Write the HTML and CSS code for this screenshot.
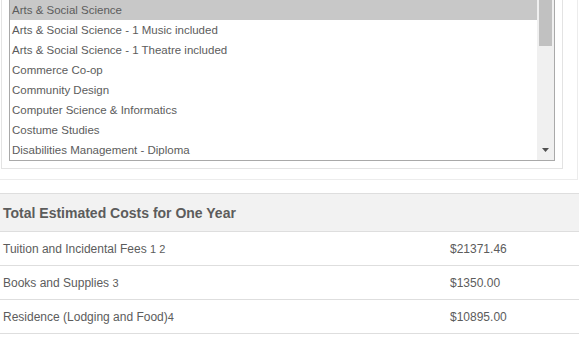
FILE: index.html
```html
<!DOCTYPE html>
<html lang="en">
<head>
    <meta charset="UTF-8">
    <meta name="viewport" content="width=device-width, initial-scale=1.0">
    <title>Estimated Costs</title>
    <link rel="stylesheet" href="styles.css">
</head>
<body>
    <div class="program-section">
        <div class="program-panel">
            <div class="listbox">
                <ul class="options">
                    <li class="selected">Arts &amp; Social Science</li>
                    <li>Arts &amp; Social Science - 1 Music included</li>
                    <li>Arts &amp; Social Science - 1 Theatre included</li>
                    <li>Commerce Co-op</li>
                    <li>Community Design</li>
                    <li>Computer Science &amp; Informatics</li>
                    <li>Costume Studies</li>
                    <li>Disabilities Management - Diploma</li>
                </ul>
                <div class="scrollbar">
                    <div class="thumb"></div>
                    <svg class="arrow" width="7" height="4" viewBox="0 0 7 4"><path d="M0 0H7L3.5 4Z" fill="#505050"/></svg>
                </div>
            </div>
        </div>
    </div>

    <table class="costs">
        <thead>
            <tr><th colspan="2">Total Estimated Costs for One Year</th></tr>
        </thead>
        <tbody>
            <tr><td>Tuition and Incidental Fees <span class="note">1 2</span></td><td class="amount">$21371.46</td></tr>
            <tr><td>Books and Supplies <span class="note">3</span></td><td class="amount">$1350.00</td></tr>
            <tr><td>Residence (Lodging and Food)<span class="note">4</span></td><td class="amount">$10895.00</td></tr>
        </tbody>
    </table>
</body>
</html>
```

FILE: styles.css
```css
body {
    margin: 0;
    font-family: "Liberation Sans", Arial, sans-serif;
    color: #5c5c5c;
    background: #fff;
    overflow: hidden;
}
.program-section {
    width: 577px;
    margin-top: -9px;
    padding-bottom: 10px;
    border-right: 1px solid #ececec;
    border-bottom: 1px solid #ececec;
}
.program-panel {
    margin-left: 1px;
    width: 562px;
    padding: 7px;
    box-sizing: border-box;
    border: 1px solid #e3e3e3;
}
.listbox {
    display: flex;
    border: 1px solid #a9a9a9;
    background: #fff;
}
.options {
    list-style: none;
    margin: 0;
    padding: 0;
    flex: 1;
}
.options li {
    height: 20px;
    line-height: 20px;
    padding-left: 2px;
    font-size: 11.5px;
    white-space: nowrap;
}
.options li.selected {
    background: #c8c8c8;
}
.scrollbar {
    width: 17px;
    background: #f0f0f0;
    position: relative;
}
.thumb {
    margin: 0 2px;
    height: 46px;
    background: #c1c1c1;
}
.arrow {
    position: absolute;
    left: 5px;
    bottom: 8px;
}
.costs {
    width: 100%;
    margin-top: 13px;
    border-collapse: collapse;
    font-size: 12px;
}
.costs th {
    text-align: left;
    font-weight: bold;
    font-size: 14px;
    height: 37px;
    padding: 0 3px;
    background: #f2f2f2;
    border-top: 1px solid #dedede;
    border-bottom: 1px solid #dedede;
}
.costs td {
    height: 33px;
    padding: 0 3px;
    border-bottom: 1px solid #dedede;
}
.costs td.amount {
    width: 126px;
    padding-left: 4px;
}
.note {
    font-size: 11px;
}
```
